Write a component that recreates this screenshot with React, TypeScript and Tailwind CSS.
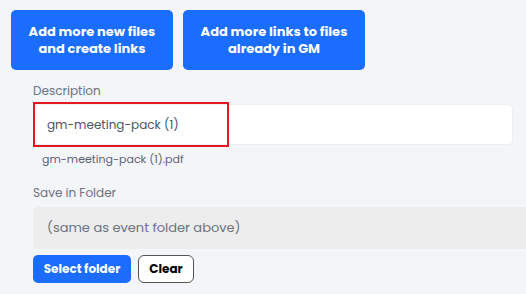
import React from "react";

const font = { fontFamily: "Poppins, 'Open Sans', 'Noto Sans', sans-serif" };

const App = () => {
  return (
    <div className="w-[526px] h-[294px] overflow-hidden bg-[#f4f5f9]" style={font}>
      {/* Top actions */}
      <div className="flex gap-[10px] pl-[11px] pt-[10px]">
        <button className="w-[162px] h-[60px] rounded-[5px] bg-[#1a6dff] text-white font-bold text-[13px] leading-[17px] px-2">
          Add more new files
          <br />
          and create links
        </button>
        <button className="w-[182px] h-[60px] rounded-[5px] bg-[#1a6dff] text-white font-bold text-[13px] leading-[17px] px-2">
          Add more links to files
          <br />
          already in GM
        </button>
      </div>

      <div className="pl-[33px] pt-[12px]">
        <label className="block text-[12px] leading-[18px] text-[#6b7280]">Description</label>
        <div className="relative mt-[4px] mr-[13px]">
          <input
            readOnly
            value="gm-meeting-pack (1)"
            className="w-full h-[41px] rounded-[5px] bg-white border border-[#eceef2] pl-[13px] text-[12px] text-[#4b5563] outline-none"
            style={font}
          />
          <div className="absolute left-0 top-[-2px] w-[196px] h-[45px] border-2 border-[#e3191f] pointer-events-none" />
        </div>
        <div className="pl-[9px] pt-[6px] text-[11px] leading-[16px] text-[#5b6270]">gm-meeting-pack (1).pdf</div>

        <label className="block mt-[17px] text-[12px] leading-[18px] text-[#6b7280]">Save in Folder</label>
        <div className="mt-[5px] h-[42px] rounded-l-[5px] bg-[#ededed] flex items-center pl-[14px] text-[13px] text-[#6b7280]">
          (same as event folder above)
        </div>
        <div className="flex gap-[7px] mt-[6px]">
          <button className="w-[98px] h-[28px] rounded-[5px] bg-[#1a6dff] text-white font-bold text-[12px]">
            Select folder
          </button>
          <button className="w-[56px] h-[28px] rounded-[6px] border border-[#555] bg-white text-black font-bold text-[12px]">
            Clear
          </button>
        </div>
      </div>
    </div>
  );
};

export default App;
